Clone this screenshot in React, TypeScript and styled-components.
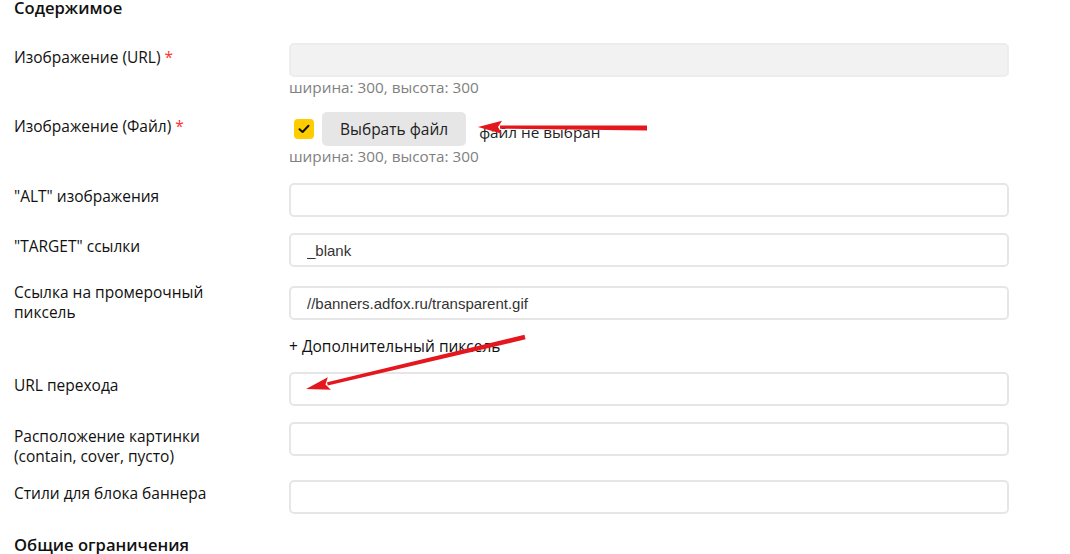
import styled, { createGlobalStyle } from "styled-components";

const GlobalStyle = createGlobalStyle`
  html, body {
    margin: 0;
    padding: 0;
    background: #ffffff;
  }
  body {
    font-family: "Open Sans", "Noto Sans", Arial, sans-serif;
    color: #111111;
    overflow: hidden;
  }
`;

const Page = styled.div`
  position: relative;
  width: 1070px;
  height: 554px;
  overflow: hidden;
  padding-left: 14px;
  box-sizing: border-box;
`;

const Form = styled.div`
  display: flex;
  flex-direction: column;
`;

const SectionTitle = styled.h3<{ $top: number }>`
  margin: ${(p) => p.$top}px 0 0;
  font-size: 16.6px;
  line-height: 20px;
  font-weight: 600;
  color: #111;
`;

const Row = styled.div<{ $top: number }>`
  display: grid;
  grid-template-columns: 275px 720px;
  align-items: start;
  margin-top: ${(p) => p.$top}px;
`;

const Label = styled.div<{ $offset?: number }>`
  margin-top: ${(p) => p.$offset ?? 4}px;
  font-size: 15.5px;
  line-height: 20px;
  color: #111;
`;

const Required = styled.span`
  color: #ff3333;
  margin-left: 4px;
`;

const Field = styled.div`
  display: flex;
  flex-direction: column;
`;

const Input = styled.input<{ $disabled?: boolean }>`
  box-sizing: border-box;
  width: 720px;
  height: 34px;
  padding: 0 16px;
  border: 2px solid ${(p) => (p.$disabled ? "#ededed" : "#e6e6e6")};
  border-radius: 5px;
  background: ${(p) => (p.$disabled ? "#f2f2f2" : "#ffffff")};
  font-family: "Liberation Sans", Arial, sans-serif;
  font-size: 15px;
  color: #333;
  outline: none;
`;

const Hint = styled.div`
  font-size: 15.3px;
  line-height: 20px;
  color: #808080;
`;

const FileLine = styled.div`
  display: flex;
  align-items: center;
  height: 34px;
`;

const Check = styled.span`
  display: inline-flex;
  align-items: center;
  justify-content: center;
  width: 20px;
  height: 20px;
  margin-left: 5px;
  border-radius: 4px;
  background: #ffcc00;
`;

const FileButton = styled.button`
  height: 34px;
  margin-left: 8px;
  padding: 0 18px;
  border: none;
  border-radius: 5px;
  background: #e6e6e6;
  font-family: "Open Sans", "Noto Sans", Arial, sans-serif;
  font-size: 15.5px;
  color: #222;
`;

const FileName = styled.span`
  margin-left: 13px;
  margin-top: 6px;
  font-size: 15.3px;
  color: #222;
`;

const AddLink = styled.div`
  margin-top: 16px;
  font-size: 15.5px;
  line-height: 20px;
  color: #111;
`;

const Overlay = styled.svg`
  position: absolute;
  left: 0;
  top: 0;
  pointer-events: none;
`;

type Pt = [number, number];

function Arrow({ tail, tip }: { tail: Pt; tip: Pt }) {
  const dx = tip[0] - tail[0];
  const dy = tip[1] - tail[1];
  const len = Math.hypot(dx, dy);
  const ux = dx / len;
  const uy = dy / len;
  const px = -uy;
  const py = ux;
  const headLen = 24;
  const headW = 6.5;
  const bx = tip[0] - ux * headLen;
  const by = tip[1] - uy * headLen;
  const tw = 2.4;
  const nw = 1.6;
  const shaft = [
    [tail[0] + px * tw, tail[1] + py * tw],
    [bx + ux * 2 + px * nw, by + uy * 2 + py * nw],
    [bx + ux * 2 - px * nw, by + uy * 2 - py * nw],
    [tail[0] - px * tw, tail[1] - py * tw],
  ]
    .map((p) => p.join(","))
    .join(" ");
  const head = [
    [tip[0], tip[1]],
    [bx + px * headW, by + py * headW],
    [bx + ux * 4, by + uy * 4],
    [bx - px * headW, by - py * headW],
  ]
    .map((p) => p.join(","))
    .join(" ");
  return (
    <g fill="#e5171e">
      <polygon points={shaft} />
      <polygon points={head} />
    </g>
  );
}

export default function App() {
  return (
    <>
      <GlobalStyle />
      <Page>
        <Form>
          <SectionTitle $top={-2}>Содержимое</SectionTitle>

          <Row $top={25}>
            <Label>
              Изображение (URL)<Required>*</Required>
            </Label>
            <Field>
              <Input $disabled disabled />
              <Hint>ширина: 300, высота: 300</Hint>
            </Field>
          </Row>

          <Row $top={15}>
            <Label>
              Изображение (Файл)<Required>*</Required>
            </Label>
            <Field>
              <FileLine>
                <Check>
                  <svg width="12" height="10" viewBox="0 0 12 10">
                    <path
                      d="M1.5 5.2 L4.6 8 L10.5 1.8"
                      fill="none"
                      stroke="#111"
                      strokeWidth="2"
                      strokeLinecap="round"
                      strokeLinejoin="round"
                    />
                  </svg>
                </Check>
                <FileButton type="button">Выбрать файл</FileButton>
                <FileName>файл не выбран</FileName>
              </FileLine>
              <Hint>ширина: 300, высота: 300</Hint>
            </Field>
          </Row>

          <Row $top={17}>
            <Label $offset={3}>"ALT" изображения</Label>
            <Field>
              <Input />
            </Field>
          </Row>

          <Row $top={16}>
            <Label $offset={3}>"TARGET" ссылки</Label>
            <Field>
              <Input defaultValue="_blank" />
            </Field>
          </Row>

          <Row $top={19}>
            <Label $offset={-4}>
              Ссылка на промерочный
              <br />
              пиксель
            </Label>
            <Field>
              <Input defaultValue="//banners.adfox.ru/transparent.gif" />
              <AddLink>+ Дополнительный пиксель</AddLink>
            </Field>
          </Row>

          <Row $top={16}>
            <Label $offset={3}>URL перехода</Label>
            <Field>
              <Input />
            </Field>
          </Row>

          <Row $top={16}>
            <Label>
              Расположение картинки
              <br />
              (contain, cover, пусто)
            </Label>
            <Field>
              <Input />
            </Field>
          </Row>

          <Row $top={14}>
            <Label $offset={3}>Стили для блока баннера</Label>
            <Field>
              <Input />
            </Field>
          </Row>

          <SectionTitle $top={21}>Общие ограничения</SectionTitle>
        </Form>

        <Overlay width="1070" height="554" viewBox="0 0 1070 554">
          <Arrow tail={[647, 128]} tip={[478, 127]} />
          <Arrow tail={[525, 337]} tip={[306, 389]} />
        </Overlay>
      </Page>
    </>
  );
}
